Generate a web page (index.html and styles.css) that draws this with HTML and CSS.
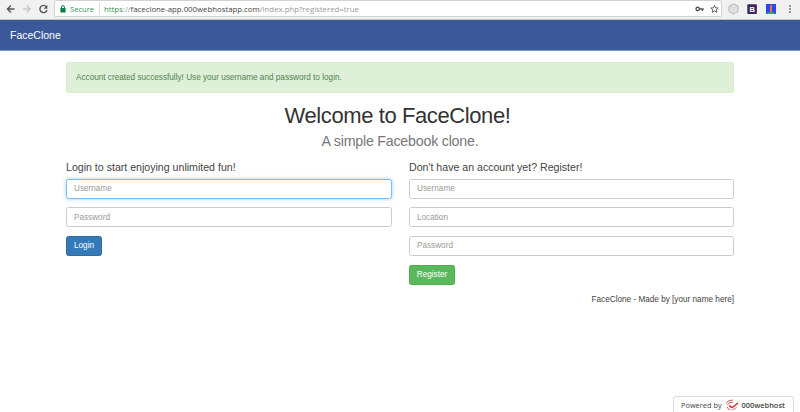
FILE: index.html
```
<!DOCTYPE html>
<html lang="en">
<head>
<meta charset="utf-8">
<title>FaceClone</title>
<link rel="stylesheet" href="styles.css">
</head>
<body>
<div class="browser">
  <svg class="nav-icons" width="54" height="18" viewBox="0 0 54 18" fill="none" stroke-width="1.4">
    <path d="M14.5 9H7.7M11 5.4 7.4 9l3.6 3.6" stroke="#555"/>
    <path d="M23 9h6.8M26.5 5.4 30.100 9l-3.600 3.600" stroke="#c8c8c8"/>
    <path d="M46.300 6.700A3.600 3.600 0 1 0 47 10" stroke="#555"/>
    <path d="M47.400 4.900v3.800h-3.800z" fill="#555"/>
  </svg>
  <div class="address">
    <svg class="lock" width="6" height="8" viewBox="0 0 6 8"><path d="M1.500 3.500V2.200a1.500 1.500 0 0 1 3 0v1.300" fill="none" stroke="#0b8043"/><rect x=".4" y="3" width="5.200" height="4.500" rx=".5" fill="#0b8043"/></svg>
    <span class="secure">Secure</span>
    <span class="url"><span class="scheme">https</span><span class="path">://</span>faceclone-app.000webhostapp.com<span class="path">/index.php?registered=true</span></span>
    <svg class="tools" width="26" height="10" viewBox="0 0 26 10" fill="none" stroke="#555">
      <circle cx="3.700" cy="5" r="1.700" stroke-width="1.400"/><path d="M5.500 5h4.200M8.500 5v2" stroke-width="1.400"/>
      <path d="m20.500 1.300 1.050 2.500 2.650.2-2 1.750.6 2.600-2.300-1.400-2.300 1.400.6-2.600-2-1.750 2.650-.2z" stroke-width=".9"/>
    </svg>
  </div>
  <svg class="extensions" width="76" height="18" viewBox="0 0 76 18">
    <path d="m9.500 4 4.500 2v5.500L9.500 14 5 11.500V6z" fill="#e4e4e4" stroke="#b4b4b4"/><path d="M5.300 6.200 9.500 8.300l4.200-2.100M9.500 8.300v5.200" fill="none" stroke="#d0d0d0" stroke-width=".8"/>
    <rect x="23.300" y="4.200" width="9.600" height="9.800" rx="1" fill="#3f285e"/>
    <text x="28.100" y="11.700" text-anchor="middle" class="ext-letter">B</text>
    <rect x="42" y="4" width="10" height="10" fill="#2947f0"/><path d="M42 14l3-2h4l3 2z" fill="#33a55c"/><path d="M47 5v7" stroke="#ef6c4d" stroke-width="2"/>
    <g fill="#666"><circle cx="66" cy="6" r=".9"/><circle cx="66" cy="9" r=".9"/><circle cx="66" cy="12" r=".9"/></g>
  </svg>
</div>
<header class="navbar">FaceClone</header>
<main class="container">
  <div class="alert">Account created successfully! Use your username and password to login.</div>
  <h1>Welcome to FaceClone!</h1>
  <p class="tagline">A simple Facebook clone.</p>
  <div class="forms">
    <form>
      <h2 class="login-title">Login to start enjoying unlimited fun!</h2>
      <input class="focused" type="text" placeholder="Username">
      <input type="password" placeholder="Password">
      <button class="login" type="button">Login</button>
    </form>
    <form>
      <h2>Don't have an account yet? Register!</h2>
      <input type="text" placeholder="Username">
      <input type="text" placeholder="Location">
      <input type="password" placeholder="Password">
      <button class="register" type="button">Register</button>
    </form>
  </div>
  <footer>FaceClone - Made by [your name here]</footer>
</main>
<div class="powered">
  <span>Powered by</span>
  <svg width="14" height="12" viewBox="0 0 14 12" fill="none" stroke="#e0444a">
    <path d="M1.200 4.200C2.800 1.800 5 .900 7.800 1.300M2.600 5.800C3.800 3.600 5.800 3 7.800 3.600M2.200 7.800c.2 1.600 1.400 2.700 3 2.900" stroke-width="1"/>
    <path d="M4.600 6.200c.2 1.900 2.200 2.500 4 1.500 2-1.100 2.200-2.700 4.400-3.400" stroke="#d92c32" stroke-width="1.500"/><path d="M6.800 10.300c2 .2 3.700-.5 4.600-1.900" stroke-width=".8"/>
  </svg>
  <strong>000webhost</strong>
</div>
</body>
</html>
```
FILE: styles.css
```
* { box-sizing: border-box; }
body {
  margin: 0;
  height: 412px;
  overflow: hidden;
  background: #fff;
  color: #444;
  font: 8.2px/12px "Liberation Sans", Arial, sans-serif;
}
.browser {
  display: flex;
  align-items: center;
  height: 20px;
  padding-bottom: 2px;
  background: #f1f1f1;
  border-bottom: 1px solid #c5c5c5;
  font-family: "Open Sans", "Noto Sans", sans-serif;
}
.address {
  display: flex;
  align-items: center;
  width: 668px;
  height: 17px;
  padding-left: 5px;
  background: #fff;
  border: 1px solid #d2d2d2;
  border-radius: 2px;
}
.lock { margin-right: 4px; }
.secure {
  width: 30px;
  border-right: 1px solid #ddd;
  color: #319457;
  font-size: 7.6px;
}
.url { margin-left: 4px; font-size: 7.8px; white-space: nowrap; }
.scheme { color: #319457; }
.path { color: #999; }
.tools { margin-left: auto; margin-right: 1px; }
.extensions { margin-left: 2px; }
.ext-letter { font: bold 7.5px "Liberation Sans", sans-serif; fill: #fff; }
.navbar {
  height: 31px;
  padding-left: 10px;
  background: #3b5998;
  border-bottom: 1px solid #8093bf;
  color: #fff;
  font-size: 10.5px;
  line-height: 30px;
}
.container { width: 668px; margin: 11px auto 0; }
.alert {
  height: 31px;
  padding-left: 9px;
  background: #dff0d8;
  border: 1px solid #d8ebcd;
  border-radius: 2.5px;
  color: #4d8450;
  line-height: 29px;
}
h1 {
  margin: 11px 0 0;
  padding-right: 5px;
  color: #333;
  font-size: 22px;
  font-weight: 400;
  letter-spacing: -.4px;
  line-height: 24px;
  text-align: center;
}
.tagline {
  margin: 5px 0 0;
  color: #777;
  font-size: 14.2px;
  letter-spacing: -.2px;
  line-height: 17px;
  text-align: center;
}
.forms {
  display: grid;
  grid-template-columns: 326px 325px;
  gap: 17px;
  margin-top: 11px;
}
form { display: flex; flex-direction: column; align-items: flex-start; }
h2 { margin: 0 0 5.5px; font-size: 10.6px; font-weight: 400; line-height: 12px; }
input {
  width: 100%;
  height: 20px;
  margin: 0 0 8.7px;
  padding: 0 7px;
  background: #fff;
  border: 1px solid #ccc;
  border-radius: 2.5px;
  font: inherit;
}
input::placeholder { color: #999; }
.focused { border-color: #7fbcec; box-shadow: 0 0 4px rgba(102, 175, 233, .6); }
button {
  height: 20px;
  padding: 0;
  border: 1px solid;
  border-radius: 2.5px;
  color: #fff;
  font: inherit;
}
.login { width: 36px; background: #337ab7; border-color: #2e6da4; }
.register { width: 46px; background: #5cb85c; border-color: #4cae4c; }
footer { margin-top: 9px; text-align: right; }
.powered {
  position: absolute;
  right: 6px;
  bottom: 0;
  display: flex;
  align-items: center;
  width: 121px;
  height: 16px;
  padding-left: 7px;
  border: 1px solid #ddd;
  border-bottom: 0;
  border-radius: 3px 3px 0 0;
  font: 7.4px/14px "Open Sans", "Noto Sans", sans-serif;
}
.powered svg { margin: 0 3px; }
.powered strong { font-weight: 600; }
```
